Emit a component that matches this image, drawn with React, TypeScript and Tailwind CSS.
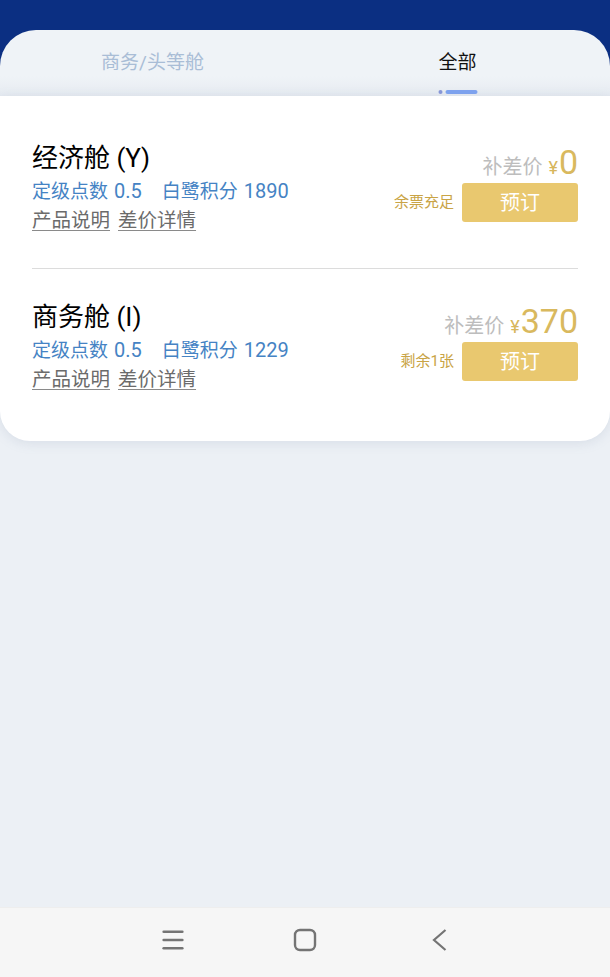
import { Menu } from "lucide-react";

const font = { fontFamily: "Roboto, 'Noto Sans CJK SC', sans-serif" };

interface Cabin {
  name: string;
  points: string;
  egret: string;
  price: string;
  stock: string;
}

const cabins: Cabin[] = [
  { name: "经济舱 (Y)", points: "0.5", egret: "1890", price: "0", stock: "余票充足" },
  { name: "商务舱 (I)", points: "0.5", egret: "1229", price: "370", stock: "剩余1张" },
];

function CabinRow({ c }: { c: Cabin }) {
  return (
    <div className="flex justify-between">
      <div className="flex flex-col">
        <div className="h-[28px] text-[26px] leading-[28px] text-black">{c.name}</div>
        <div className="mt-[5px] h-[28px] text-[19px] leading-[28px] text-[#4583c4] flex items-baseline">
          <span>定级点数</span>
          <span className="ml-[6px] text-[20px] leading-[28px]">{c.points}</span>
          <span className="ml-[20px]">白鹭积分</span>
          <span className="ml-[6px] text-[20px] leading-[28px]">{c.egret}</span>
        </div>
        <div className="mt-[2px] h-[28px] text-[19.5px] leading-[28px] text-[#6b6b6b] flex gap-[8px]">
          <span className="underline underline-offset-[3px] decoration-[#8a8a8a]">产品说明</span>
          <span className="underline underline-offset-[3px] decoration-[#8a8a8a]">差价详情</span>
        </div>
      </div>
      <div className="flex flex-col items-end">
        <div className="flex items-baseline h-[36px] leading-[36px]">
          <span className="text-[20px] text-[#bdbdbd]">补差价</span>
          <span className="ml-[6px] text-[18px] text-[#d7b65c]">¥</span>
          <span className="ml-[1px] text-[34px] text-[#d9b95e]">{c.price}</span>
        </div>
        <div className="mt-[3px] flex items-center gap-[8px]">
          <span className="text-[15px] text-[#c9a446]">{c.stock}</span>
          <button className="w-[116px] h-[39px] rounded-[3px] bg-[#e9c86f] text-white text-[20px]">
            预订
          </button>
        </div>
      </div>
    </div>
  );
}

export default function App() {
  return (
    <div className="w-[610px] h-[977px] bg-[#ecf0f5] flex flex-col overflow-hidden" style={font}>
      <div className="bg-[#0b2f82] pt-[30px]">
        <div className="h-[66px] rounded-t-[36px] bg-[linear-gradient(to_bottom,#eff3f7_70%,#e6ebf1)] flex">
          <div className="flex-1 flex items-center justify-center pt-[1px] text-[19px] text-[#a9bdd6]">
            商务/头等舱
          </div>
          <div className="flex-1 flex flex-col items-center justify-center relative text-[19px] text-[#111]">
            <span className="pt-[1px]">全部</span>
            <div className="absolute bottom-[2px] left-1/2 -translate-x-1/2 flex items-center gap-[3px]">
              <div className="w-[4px] h-[4px] rounded-full bg-[#8797d8]" />
              <div className="w-[32px] h-[4px] rounded-full bg-[#7ea3f0]" />
            </div>
          </div>
        </div>
      </div>

      <div className="bg-white rounded-b-[30px] shadow-[0_2px_12px_rgba(120,140,170,0.18)] px-[32px] pt-[48px] pb-[47px] relative">
        <CabinRow c={cabins[0]} />
        <div className="h-px bg-[#dcdcdc] mt-[33px] mb-[34px]" />
        <CabinRow c={cabins[1]} />
      </div>

      <div className="flex-1" />

      <div className="h-[70px] bg-[#f6f6f6] border-t border-[#eeeeee] flex items-center justify-between px-[159px] pb-[5px]">
        <Menu className="w-[28px] h-[28px] text-[#747474]" strokeWidth={2.2} />
        <svg width="24" height="24" viewBox="0 0 24 24" className="mr-[8px]">
          <rect x="2" y="2" width="20" height="20" rx="5" fill="none" stroke="#747474" strokeWidth="2.4" />
        </svg>
        <svg width="20" height="24" viewBox="0 0 20 24">
          <path d="M14.5 2 L3 12 L14.5 22" fill="none" stroke="#747474" strokeWidth="2.2" />
        </svg>
      </div>
    </div>
  );
}
